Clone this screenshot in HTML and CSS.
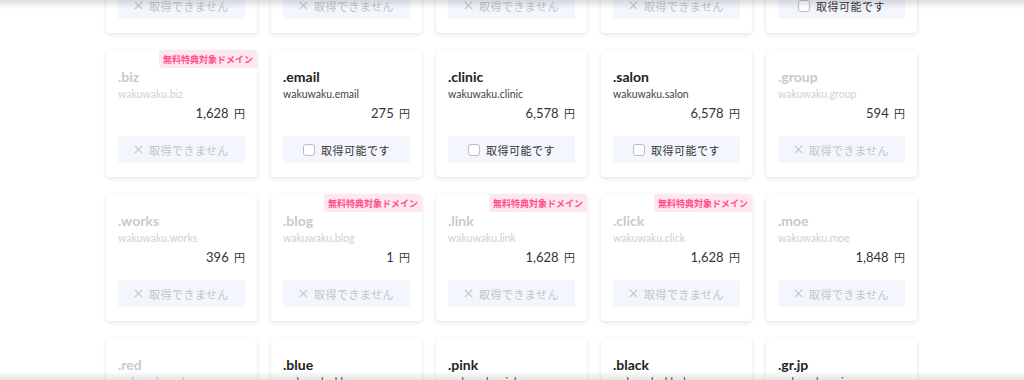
FILE: index.html
```html
<!DOCTYPE html>
<html lang="ja">
<head>
    <meta charset="UTF-8">
    <meta name="viewport" content="width=device-width, initial-scale=1.0">
    <title>ドメイン一覧</title>
    <link rel="stylesheet" href="styles.css">
</head>
<body>
    <div class="fade-top"></div>
    <div class="domain-list">
        <!-- row 1 (scrolled off) -->
        <div class="card off">
            <p class="tld">.shop</p>
            <p class="full">wakuwaku.shop</p>
            <p class="price">1,628 <span>円</span></p>
            <div class="btn"><svg class="x" viewBox="0 0 10 10"><path d="M1 1L9 9M9 1L1 9"/></svg>取得できません</div>
        </div>
        <div class="card off">
            <p class="tld">.site</p>
            <p class="full">wakuwaku.site</p>
            <p class="price">1,628 <span>円</span></p>
            <div class="btn"><svg class="x" viewBox="0 0 10 10"><path d="M1 1L9 9M9 1L1 9"/></svg>取得できません</div>
        </div>
        <div class="card off">
            <p class="tld">.online</p>
            <p class="full">wakuwaku.online</p>
            <p class="price">1,628 <span>円</span></p>
            <div class="btn"><svg class="x" viewBox="0 0 10 10"><path d="M1 1L9 9M9 1L1 9"/></svg>取得できません</div>
        </div>
        <div class="card off">
            <p class="tld">.tokyo</p>
            <p class="full">wakuwaku.tokyo</p>
            <p class="price">1,628 <span>円</span></p>
            <div class="btn"><svg class="x" viewBox="0 0 10 10"><path d="M1 1L9 9M9 1L1 9"/></svg>取得できません</div>
        </div>
        <div class="card">
            <p class="tld">.design</p>
            <p class="full">wakuwaku.design</p>
            <p class="price">6,578 <span>円</span></p>
            <div class="btn"><span class="check"></span>取得可能です</div>
        </div>

        <!-- row 2 -->
        <div class="card off">
            <span class="badge">無料特典対象ドメイン</span>
            <p class="tld">.biz</p>
            <p class="full">wakuwaku.biz</p>
            <p class="price">1,628 <span>円</span></p>
            <div class="btn"><svg class="x" viewBox="0 0 10 10"><path d="M1 1L9 9M9 1L1 9"/></svg>取得できません</div>
        </div>
        <div class="card">
            <p class="tld">.email</p>
            <p class="full">wakuwaku.email</p>
            <p class="price">275 <span>円</span></p>
            <div class="btn"><span class="check"></span>取得可能です</div>
        </div>
        <div class="card">
            <p class="tld">.clinic</p>
            <p class="full">wakuwaku.clinic</p>
            <p class="price">6,578 <span>円</span></p>
            <div class="btn"><span class="check"></span>取得可能です</div>
        </div>
        <div class="card">
            <p class="tld">.salon</p>
            <p class="full">wakuwaku.salon</p>
            <p class="price">6,578 <span>円</span></p>
            <div class="btn"><span class="check"></span>取得可能です</div>
        </div>
        <div class="card off">
            <p class="tld">.group</p>
            <p class="full">wakuwaku.group</p>
            <p class="price">594 <span>円</span></p>
            <div class="btn"><svg class="x" viewBox="0 0 10 10"><path d="M1 1L9 9M9 1L1 9"/></svg>取得できません</div>
        </div>

        <!-- row 3 -->
        <div class="card off">
            <p class="tld">.works</p>
            <p class="full">wakuwaku.works</p>
            <p class="price">396 <span>円</span></p>
            <div class="btn"><svg class="x" viewBox="0 0 10 10"><path d="M1 1L9 9M9 1L1 9"/></svg>取得できません</div>
        </div>
        <div class="card off">
            <span class="badge">無料特典対象ドメイン</span>
            <p class="tld">.blog</p>
            <p class="full">wakuwaku.blog</p>
            <p class="price">1 <span>円</span></p>
            <div class="btn"><svg class="x" viewBox="0 0 10 10"><path d="M1 1L9 9M9 1L1 9"/></svg>取得できません</div>
        </div>
        <div class="card off">
            <span class="badge">無料特典対象ドメイン</span>
            <p class="tld">.link</p>
            <p class="full">wakuwaku.link</p>
            <p class="price">1,628 <span>円</span></p>
            <div class="btn"><svg class="x" viewBox="0 0 10 10"><path d="M1 1L9 9M9 1L1 9"/></svg>取得できません</div>
        </div>
        <div class="card off">
            <span class="badge">無料特典対象ドメイン</span>
            <p class="tld">.click</p>
            <p class="full">wakuwaku.click</p>
            <p class="price">1,628 <span>円</span></p>
            <div class="btn"><svg class="x" viewBox="0 0 10 10"><path d="M1 1L9 9M9 1L1 9"/></svg>取得できません</div>
        </div>
        <div class="card off">
            <p class="tld">.moe</p>
            <p class="full">wakuwaku.moe</p>
            <p class="price">1,848 <span>円</span></p>
            <div class="btn"><svg class="x" viewBox="0 0 10 10"><path d="M1 1L9 9M9 1L1 9"/></svg>取得できません</div>
        </div>

        <!-- row 4 -->
        <div class="card off">
            <p class="tld">.red</p>
            <p class="full">wakuwaku.red</p>
            <p class="price">1,628 <span>円</span></p>
            <div class="btn"><svg class="x" viewBox="0 0 10 10"><path d="M1 1L9 9M9 1L1 9"/></svg>取得できません</div>
        </div>
        <div class="card">
            <p class="tld">.blue</p>
            <p class="full">wakuwaku.blue</p>
            <p class="price">1,628 <span>円</span></p>
            <div class="btn"><span class="check"></span>取得可能です</div>
        </div>
        <div class="card">
            <p class="tld">.pink</p>
            <p class="full">wakuwaku.pink</p>
            <p class="price">1,628 <span>円</span></p>
            <div class="btn"><span class="check"></span>取得可能です</div>
        </div>
        <div class="card">
            <p class="tld">.black</p>
            <p class="full">wakuwaku.black</p>
            <p class="price">1,628 <span>円</span></p>
            <div class="btn"><span class="check"></span>取得可能です</div>
        </div>
        <div class="card">
            <p class="tld">.gr.jp</p>
            <p class="full">wakuwaku.gr.jp</p>
            <p class="price">1,628 <span>円</span></p>
            <div class="btn"><span class="check"></span>取得可能です</div>
        </div>
    </div>
    <div class="fade-bottom"></div>
</body>
</html>
```

FILE: styles.css
```css
body {
    margin: 0;
    background-color: #fff;
    font-family: "Lato", "Noto Sans CJK JP", sans-serif;
    color: #333;
    overflow: hidden;
}

.domain-list {
    display: grid;
    grid-template-columns: repeat(5, 151px);
    column-gap: 14px;
    row-gap: 17px;
    margin: -94px 0 0 106px;
}

.card {
    position: relative;
    height: 127px;
    box-sizing: border-box;
    padding: 17px 12px 14px;
    background-color: #fff;
    border-radius: 4px;
    box-shadow: 0 2px 4px rgba(0,0,0,0.10), 0 0 2px rgba(0,0,0,0.04);
}

.card p {
    margin: 0;
}

.tld {
    font-size: 14px;
    font-weight: 700;
    line-height: 20px;
    color: #222;
}

.full {
    font-size: 10.5px;
    line-height: 14px;
    color: #444;
}

.price {
    margin-top: 3px !important;
    font-size: 13px;
    line-height: 18px;
    text-align: right;
    color: #333;
}

.price span {
    font-family: "Noto Sans CJK JP", sans-serif;
    font-size: 11px;
    margin-left: 2px;
}

.btn {
    margin-top: 14px;
    height: 27px;
    display: flex;
    align-items: center;
    justify-content: center;
    gap: 6px;
    background-color: #f3f6fd;
    border-radius: 2px;
    font-family: "Noto Sans CJK JP", sans-serif;
    font-size: 11px;
    letter-spacing: 0.5px;
    color: #333;
}

.check {
    width: 10px;
    height: 10px;
    border: 1px solid #bdbdbd;
    border-radius: 3px;
    background-color: #fff;
}

.x {
    width: 9px;
    height: 9px;
    fill: none;
    stroke: currentColor;
    stroke-width: 1.3;
}

/* unavailable domains */
.off .tld {
    color: #c9c9c9;
}
.off .full {
    color: #cfcfcf;
}
.off .btn {
    color: #c4c4c4;
}

.badge {
    position: absolute;
    top: 0;
    right: 0;
    height: 18px;
    padding: 0 4px;
    display: flex;
    align-items: center;
    background-color: #ffe7ef;
    color: #ff4f8d;
    font-family: "Noto Sans CJK JP", sans-serif;
    font-size: 9px;
    font-weight: 700;
    border-radius: 0 4px 0 4px;
}

.fade-top, .fade-bottom {
    position: fixed;
    left: 0;
    right: 0;
    height: 9px;
    z-index: 2;
}
.fade-top {
    top: 0;
    background: linear-gradient(rgba(0,0,0,0.13), rgba(0,0,0,0));
}
.fade-bottom {
    bottom: 0;
    background: linear-gradient(rgba(0,0,0,0), rgba(0,0,0,0.1));
}
```
